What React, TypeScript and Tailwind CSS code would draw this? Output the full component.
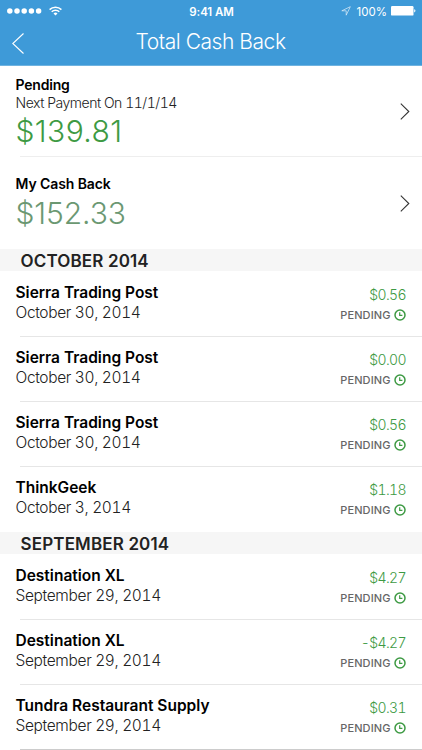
import { clsx } from 'clsx'

type Entry = {
  store: string
  date: string
  amount: string
}

type Section = {
  title: string
  entries: Entry[]
}

const sections: Section[] = [
  {
    title: 'OCTOBER 2014',
    entries: [
      { store: 'Sierra Trading Post', date: 'October 30, 2014', amount: '$0.56' },
      { store: 'Sierra Trading Post', date: 'October 30, 2014', amount: '$0.00' },
      { store: 'Sierra Trading Post', date: 'October 30, 2014', amount: '$0.56' },
      { store: 'ThinkGeek', date: 'October 3, 2014', amount: '$1.18' },
    ],
  },
  {
    title: 'SEPTEMBER 2014',
    entries: [
      { store: 'Destination XL', date: 'September 29, 2014', amount: '$4.27' },
      { store: 'Destination XL', date: 'September 29, 2014', amount: '-$4.27' },
      { store: 'Tundra Restaurant Supply', date: 'September 29, 2014', amount: '$0.31' },
    ],
  },
]

function StatusBar() {
  return (
    <div className="grid h-[22px] grid-cols-[1fr_auto_1fr] items-center pl-[7px] pr-[6px] text-white">
      <div className="flex items-center">
        <svg className="h-[6px] w-[35px]" viewBox="0 0 35 6" fill="currentColor">
          <circle cx="2.8" cy="3" r="2.75" />
          <circle cx="10" cy="3" r="2.75" />
          <circle cx="17.2" cy="3" r="2.75" />
          <circle cx="24.4" cy="3" r="2.75" />
          <circle cx="31.6" cy="3" r="2.75" />
        </svg>
        <svg className="ml-[7px] h-[10px] w-[13px]" viewBox="0 0 13 10" fill="none" stroke="currentColor" strokeWidth="1.5">
          <path d="M0.6 3.6a8.4 8.4 0 0 1 11.8 0" />
          <path d="M2.7 5.8a5.4 5.4 0 0 1 7.6 0" />
          <path d="M4.5 7.4a2.9 2.9 0 0 1 4 0L6.5 9.5z" fill="currentColor" stroke="none" />
        </svg>
      </div>
      <span className="pt-px text-[11.5px] leading-4 font-semibold tracking-[-0.1px]">9:41 AM</span>
      <div className="flex items-center justify-end">
        <svg className="h-[10px] w-[10px]" viewBox="0 0 10 10" fill="none" stroke="currentColor" strokeWidth="0.7" opacity="0.85">
          <path d="M9.3 0.7L0.8 4.8h4.4v4.4z" />
        </svg>
        <span className="ml-[6px] pt-px text-[11.5px] leading-4 font-normal">100%</span>
        <svg className="ml-[4px] h-[10px] w-[25px]" viewBox="0 0 25 10" fill="currentColor">
          <rect x="0" y="0" width="22.5" height="9.6" rx="1.2" />
          <path d="M23.2 3.2c1.7 0.3 1.7 2.9 0 3.2z" />
        </svg>
      </div>
    </div>
  )
}

function Chevron() {
  return (
    <svg className="h-[17px] w-[10px] shrink-0" viewBox="0 0 10 17" fill="none" stroke="#333" strokeWidth="1.1">
      <path d="M0.8 0.6L8.8 8.5L0.8 16.4" />
    </svg>
  )
}

function Clock() {
  return (
    <svg className="h-[12px] w-[12px]" viewBox="0 0 12 12" fill="none" stroke="#3d9a43" strokeWidth="1.5">
      <circle cx="6" cy="6" r="5" />
      <path d="M5.7 3.2v3.1h2.7" strokeWidth="1.2" />
    </svg>
  )
}

function EntryRow({ entry, first }: { entry: Entry; first: boolean }) {
  return (
    <div className="h-[65.15px]">
      <div className={clsx('ml-5 h-px', !first && 'bg-[#e6e6e6]')} />
      <div className="flex items-start justify-between pl-[15.5px] pr-4">
        <div className="pt-[10.95px]">
          <div className="text-[15.5px] leading-5 font-semibold text-black">{entry.store}</div>
          <div className="text-[15.5px] leading-5 font-light tracking-[-0.35px] text-[#222] tabular-nums">{entry.date}</div>
        </div>
        <div className="flex flex-col items-end pt-[13px]">
          <div className="text-[14px] leading-5 font-light tracking-[-0.6px] text-[#3d9a43] tabular-nums">{entry.amount}</div>
          <div className="flex items-center gap-[3.5px]">
            <span className="text-[11px] leading-5 font-medium tracking-[0.1px] text-[#666]">PENDING</span>
            <Clock />
          </div>
        </div>
      </div>
    </div>
  )
}

export default function App() {
  return (
    <div className="flex h-[750px] w-[422px] flex-col overflow-hidden bg-white font-['Inter',sans-serif]">
      <header className="h-[66px] shrink-0 border-b border-[#6fb3e0] bg-[#3e9ad8]">
        <StatusBar />
        <div className="grid h-[43px] grid-cols-[1fr_auto_1fr] items-center pr-[13px] pl-3 text-white">
          <svg className="h-[21px] w-[12px]" viewBox="0 0 12 21" fill="none" stroke="currentColor" strokeWidth="1.1">
            <path d="M11.5 0.5L0.8 10.5L11.5 20.5" />
          </svg>
          <h1 className="pb-[3px] text-[21px] leading-7 font-light tracking-[-0.45px]">Total Cash Back</h1>
        </div>
      </header>

      <div className="flex h-[90px] shrink-0 items-center justify-between pl-[15.5px] pr-3">
        <div className="pt-[6px]">
          <div className="text-[14px] leading-[18px] font-semibold tracking-[-0.2px] text-black">Pending</div>
          <div className="text-[14px] leading-[17px] font-light tracking-[-0.47px] text-[#222] tabular-nums">
            Next Payment On 11/1/14
          </div>
          <div className="text-[30px] leading-[41px] font-light tracking-[0.4px] text-[#3d9a43]">$139.81</div>
        </div>
        <Chevron />
      </div>
      <div className="ml-5 h-px shrink-0 bg-[#eee]" />
      <div className="flex h-[92px] shrink-0 items-center justify-between pl-[15.5px] pr-3">
        <div className="pt-[2px]">
          <div className="text-[14px] leading-[18px] font-semibold tracking-[-0.1px] text-black">My Cash Back</div>
          <div className="text-[30px] leading-10 font-light tracking-[-0.1px] text-[#6b9872]">$152.33</div>
        </div>
        <Chevron />
      </div>

      {sections.map(section => (
        <section key={section.title} className="shrink-0">
          <h2 className="h-[22px] bg-[#f6f6f6] pl-[20.5px] text-[17px] leading-[25px] font-semibold tracking-[0.15px] text-[#222]">
            {section.title}
          </h2>
          {section.entries.map((entry, j) => (
            <EntryRow key={j} entry={entry} first={j === 0} />
          ))}
        </section>
      ))}
      <div className="ml-5 h-px shrink-0 bg-[#ccc]" />
    </div>
  )
}
